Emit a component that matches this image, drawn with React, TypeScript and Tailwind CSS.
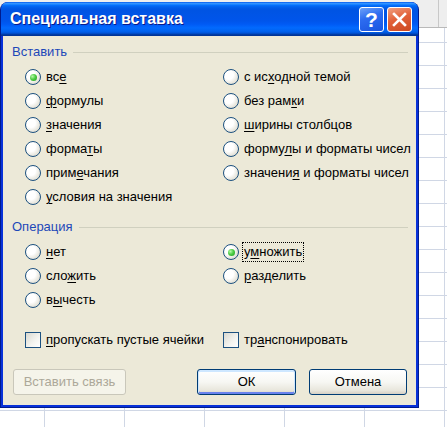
import React from "react";

type Item = { text: string; u: number; checked?: boolean; focused?: boolean };

const pasteLeft: Item[] = [
  { text: "все", u: 2, checked: true },
  { text: "формулы", u: 0 },
  { text: "значения", u: 0 },
  { text: "форматы", u: 5 },
  { text: "примечания", u: 4 },
  { text: "условия на значения", u: 0 },
];

const pasteRight: Item[] = [
  { text: "с исходной темой", u: 4 },
  { text: "без рамки", u: 7 },
  { text: "ширины столбцов", u: 0 },
  { text: "формулы и форматы чисел", u: 5 },
  { text: "значения и форматы чисел", u: 7 },
];

const opLeft: Item[] = [
  { text: "нет", u: 0 },
  { text: "сложить", u: 3 },
  { text: "вычесть", u: 1 },
];

const opRight: Item[] = [
  { text: "умножить", u: 1, checked: true, focused: true },
  { text: "разделить", u: 0 },
];

function Mnemonic({ text, u }: { text: string; u: number }) {
  if (u < 0) return <>{text}</>;
  return (
    <>
      {text.slice(0, u)}
      <span className="underline decoration-1 underline-offset-[2px]">{text[u]}</span>
      {text.slice(u + 1)}
    </>
  );
}

function Caption({ item }: { item: Item }) {
  return (
    <span
      className={
        "ml-[3px] whitespace-nowrap border px-px leading-[18px] " +
        (item.focused ? "border-dotted border-black" : "border-transparent")
      }
    >
      <Mnemonic text={item.text} u={item.u} />
    </span>
  );
}

function Radio({ item }: { item: Item }) {
  return (
    <div className="flex h-6 items-center">
      <span className="flex h-4 w-4 shrink-0 items-center justify-center rounded-full border border-[#1c5180] bg-[radial-gradient(circle_at_35%_35%,#ffffff_0%,#ffffff_35%,#e2e0d5_75%,#cdc9bb_100%)]">
        {item.checked && (
          <span className="h-[7px] w-[7px] rounded-full bg-[radial-gradient(circle_at_35%_35%,#b5f9a8_0%,#4fcd45_45%,#1c9a1c_100%)]" />
        )}
      </span>
      <Caption item={item} />
    </div>
  );
}

function Checkbox({ item }: { item: Item }) {
  return (
    <div className="flex h-6 items-center">
      <span className="h-4 w-4 shrink-0 border border-[#1c5180] bg-[linear-gradient(135deg,#d8d8d0_0%,#f4f4f0_60%,#ffffff_100%)]" />
      <Caption item={item} />
    </div>
  );
}

function Group({ title }: { title: string }) {
  return (
    <div className="flex h-4 items-center">
      <span className="text-[#1d48b8]">{title}</span>
      <div className="ml-[6px] h-px flex-1 bg-[#d0d0bf]" />
    </div>
  );
}

function Column({ items }: { items: Item[] }) {
  return (
    <div className="flex flex-col">
      {items.map((item) => (
        <Radio key={item.text} item={item} />
      ))}
    </div>
  );
}

function TitleBar() {
  return (
    <div className="flex h-[34px] items-center rounded-t-[7px] bg-[linear-gradient(180deg,#0058ee_0%,#3593ff_4%,#288eff_6%,#127dff_8%,#036ffc_10%,#0262ee_14%,#0057e5_20%,#0054e3_24%,#0055eb_56%,#005bf5_66%,#026afe_76%,#0062ef_86%,#0052d6_92%,#0040ab_94%,#003092_100%)] pl-[9px] pr-[6px]">
      <span className="text-[16px] font-bold text-white [text-shadow:1px_1px_0_#0a1a8a]">
        Специальная вставка
      </span>
      <div className="ml-auto flex gap-[3px]">
        <div className="flex h-[25px] w-[25px] items-center justify-center rounded-[3px] border border-white bg-[linear-gradient(160deg,#6da2f8_0%,#2d6cf0_40%,#1a55e0_100%)] text-[21px] font-bold leading-none text-white">
          ?
        </div>
        <div className="flex h-[25px] w-[25px] items-center justify-center rounded-[3px] border border-white bg-[linear-gradient(160deg,#f0a080_0%,#e2623a_45%,#cc4a22_100%)]">
          <svg width="15" height="15" viewBox="0 0 15 15">
            <path d="M2 2L13 13M13 2L2 13" stroke="#ffffff" strokeWidth="2.6" strokeLinecap="square" />
          </svg>
        </div>
      </div>
    </div>
  );
}

function Button({ label, w, kind }: { label: string; w: string; kind?: "default" | "disabled" }) {
  const base = "flex h-[26px] items-center justify-center rounded-[3px] border " + w + " ";
  if (kind === "disabled")
    return <div className={base + "border-[#c9c7ba] bg-[#f5f4ea] text-[#aca899]"}>{label}</div>;
  return (
    <div
      className={
        base +
        "border-[#003c74] bg-[linear-gradient(180deg,#ffffff_0%,#f7f7f3_50%,#e8e6dc_85%,#d6d0c5_100%)] text-black" +
        (kind === "default" ? " shadow-[inset_0_1px_0_1px_#cee7ff,inset_0_-1px_0_1px_#6982ee]" : "")
      }
    >
      {label}
    </div>
  );
}

function Dialog() {
  return (
    <div className="absolute left-0 top-[2px] flex h-[406px] w-[419px] flex-col rounded-t-[8px] border-x border-b border-[#001b8e] bg-[#0831d9]">
      <TitleBar />
      <div className="mx-[2px] mb-[2px] flex flex-1 flex-col bg-[#ece9d8] pl-[9px] pr-[8px] pt-[8px] text-[13px] text-black">
        <Group title="Вставить" />
        <div className="ml-[13px] mt-[5px] grid grid-cols-[198px_1fr]">
          <Column items={pasteLeft} />
          <Column items={pasteRight} />
        </div>
        <div className="mt-[10px]">
          <Group title="Операция" />
        </div>
        <div className="ml-[13px] mt-[5px] grid grid-cols-[198px_1fr]">
          <Column items={opLeft} />
          <Column items={opRight} />
        </div>
        <div className="ml-[13px] mt-[16px] grid grid-cols-[198px_1fr]">
          <Checkbox item={{ text: "пропускать пустые ячейки", u: 0 }} />
          <Checkbox item={{ text: "транспонировать", u: 2 }} />
        </div>
        <div className="mx-px mt-[17px] flex items-center">
          <Button label="Вставить связь" w="w-[113px]" kind="disabled" />
          <div className="flex-1" />
          <Button label="ОК" w="w-[99px]" kind="default" />
          <div className="w-[13px]" />
          <Button label="Отмена" w="w-[98px]" />
        </div>
      </div>
    </div>
  );
}

export default function App() {
  return (
    <div className="relative h-[427px] w-[447px] overflow-hidden bg-white bg-[linear-gradient(to_right,#d0d7e5_1px,transparent_1px),linear-gradient(to_bottom,#d0d7e5_1px,transparent_1px)] bg-size-[80px_23px] bg-position-[44px_19px] font-['Liberation_Sans',Arial,sans-serif]">
      <div className="absolute inset-x-0 top-0 flex h-[28px] justify-end border-b border-[#b9b9b9] bg-[#eeeeee]">
        <div className="mr-[8px] w-px bg-[#c8c8c8]" />
      </div>
      <Dialog />
    </div>
  );
}
